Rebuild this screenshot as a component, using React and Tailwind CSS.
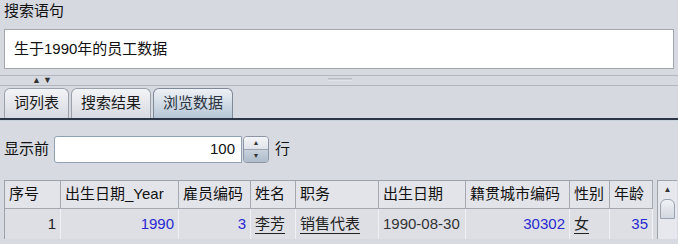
import React from "react";

const font = { fontFamily: '"Liberation Sans", "Noto Sans CJK SC", sans-serif' };

const cols = [
  { h: "序号", w: 56, v: "1", cls: "text-right text-[#222]" },
  { h: "出生日期_Year", w: 118, v: "1990", cls: "text-right text-[#2a2ad0]" },
  { h: "雇员编码", w: 72, v: "3", cls: "text-right text-[#2a2ad0]" },
  { h: "姓名", w: 45, v: "李芳", cls: "text-left underline underline-offset-4 text-[#222]" },
  { h: "职务", w: 83, v: "销售代表", cls: "text-left underline underline-offset-4 text-[#222]" },
  { h: "出生日期", w: 87, v: "1990-08-30", cls: "text-left text-[#333]" },
  { h: "籍贯城市编码", w: 104, v: "30302", cls: "text-right text-[#2a2ad0]" },
  { h: "性别", w: 40, v: "女", cls: "text-left underline underline-offset-4 text-[#222]" },
  { h: "年龄", w: 43, v: "35", cls: "text-right text-[#2a2ad0]" },
];

function Tab({ label, active }) {
  return (
    <div
      className={
        "flex h-[30px] items-center rounded-t-[6px] border border-b-0 px-[9px] text-[15px] " +
        (active
          ? "border-[#7f8a99] bg-gradient-to-b from-[#eef1f5] to-[#b6c6d6] text-[#2b3440]"
          : "border-[#9aa1ab] bg-gradient-to-b from-[#f3f4f7] to-[#d7dae1] text-[#1a1a1a]")
      }
    >
      {label}
    </div>
  );
}

export default function App() {
  return (
    <div className="flex h-[244px] w-[678px] flex-col overflow-hidden bg-[#d7d9e1]" style={font}>
      <div className="h-[29px] pl-[4px] pt-[1px] text-[15px] leading-[20px] text-[#111]">搜索语句</div>
      <div className="mx-[4px] flex h-[40px] items-center border border-[#a3a6ad] bg-white pl-[9px] text-[15px] text-[#111]">
        生于1990年的员工数据
      </div>

      <div className="mt-[6px] flex h-[11px] flex-col border-y border-[#b3b6be]">
        <div className="relative flex h-full items-center">
          <span className="ml-[32px] text-[9px] leading-none text-[#333]">▲</span>
          <span className="ml-[2px] text-[9px] leading-none text-[#333]">▼</span>
          <div className="absolute left-[328px] top-[2px] h-[3px] w-[24px] bg-gradient-to-b from-[#aeb1b8] to-[#eceef2]" />
        </div>
      </div>

      <div className="mt-[2px] flex items-end gap-[2px] pl-[4px]">
        <Tab label="词列表" />
        <Tab label="搜索结果" />
        <Tab label="浏览数据" active />
      </div>
      <div className="h-[3px] border-t-2 border-[#2c3646] bg-[#c9d3de]" />

      <div className="flex-1 bg-[#d8dae1] pl-[4px] pt-[15px]">
        <div className="flex h-[27px] items-center text-[15px] text-[#111]">
          <span className="w-[50px]">显示前</span>
          <div className="flex h-[27px] w-[188px] items-center justify-end rounded-l-[3px] border border-[#8ea1b5] bg-white pr-[6px] text-[15px] text-[#111]">
            100
          </div>
          <div className="ml-[1px] flex h-[27px] w-[26px] flex-col overflow-hidden rounded-[4px] border border-[#8b95a3]">
            <div className="flex flex-1 items-center justify-center bg-gradient-to-b from-[#f4f5f8] to-[#dfe3e9] text-[7px] text-[#333]">▲</div>
            <div className="flex flex-1 items-center justify-center border-t border-[#9aa3af] bg-gradient-to-b from-[#c8d2dd] to-[#aebccb] text-[7px] text-[#333]">▼</div>
          </div>
          <span className="ml-[6px]">行</span>
        </div>

        <div className="mt-[17px] flex">
          <div className="border-l border-t border-[#9ea2aa]">
            <div className="flex h-[28px] bg-[#e3e4e9]">
              {cols.map((c) => (
                <div
                  key={c.h}
                  style={{ width: c.w }}
                  className="flex items-center border-r border-b border-[#a4a8b0] px-[4px] text-[15px] text-[#111] whitespace-nowrap"
                >
                  {c.h}
                </div>
              ))}
            </div>
            <div className="flex h-[30px] bg-[#dddfe5]">
              {cols.map((c) => (
                <div
                  key={c.h}
                  style={{ width: c.w }}
                  className={"flex items-center border-r border-[#f0f1f4] px-[4px] text-[15px] whitespace-nowrap " + c.cls + (c.cls.includes("text-right") ? " justify-end" : "")}
                >
                  {c.v}
                </div>
              ))}
            </div>
          </div>
          <div className="ml-[4px] flex w-[20px] flex-col border-l border-t border-[#a0a4ab] bg-[#e6e8ed]">
            <div className="flex h-[18px] items-center justify-center text-[8px] text-[#333]">▲</div>
            <div className="mx-[2px] h-[20px] rounded-t-[6px] border border-[#9aa3af] bg-gradient-to-b from-[#f0f2f5] to-[#d2d8e0]" />
          </div>
        </div>
      </div>
    </div>
  );
}
